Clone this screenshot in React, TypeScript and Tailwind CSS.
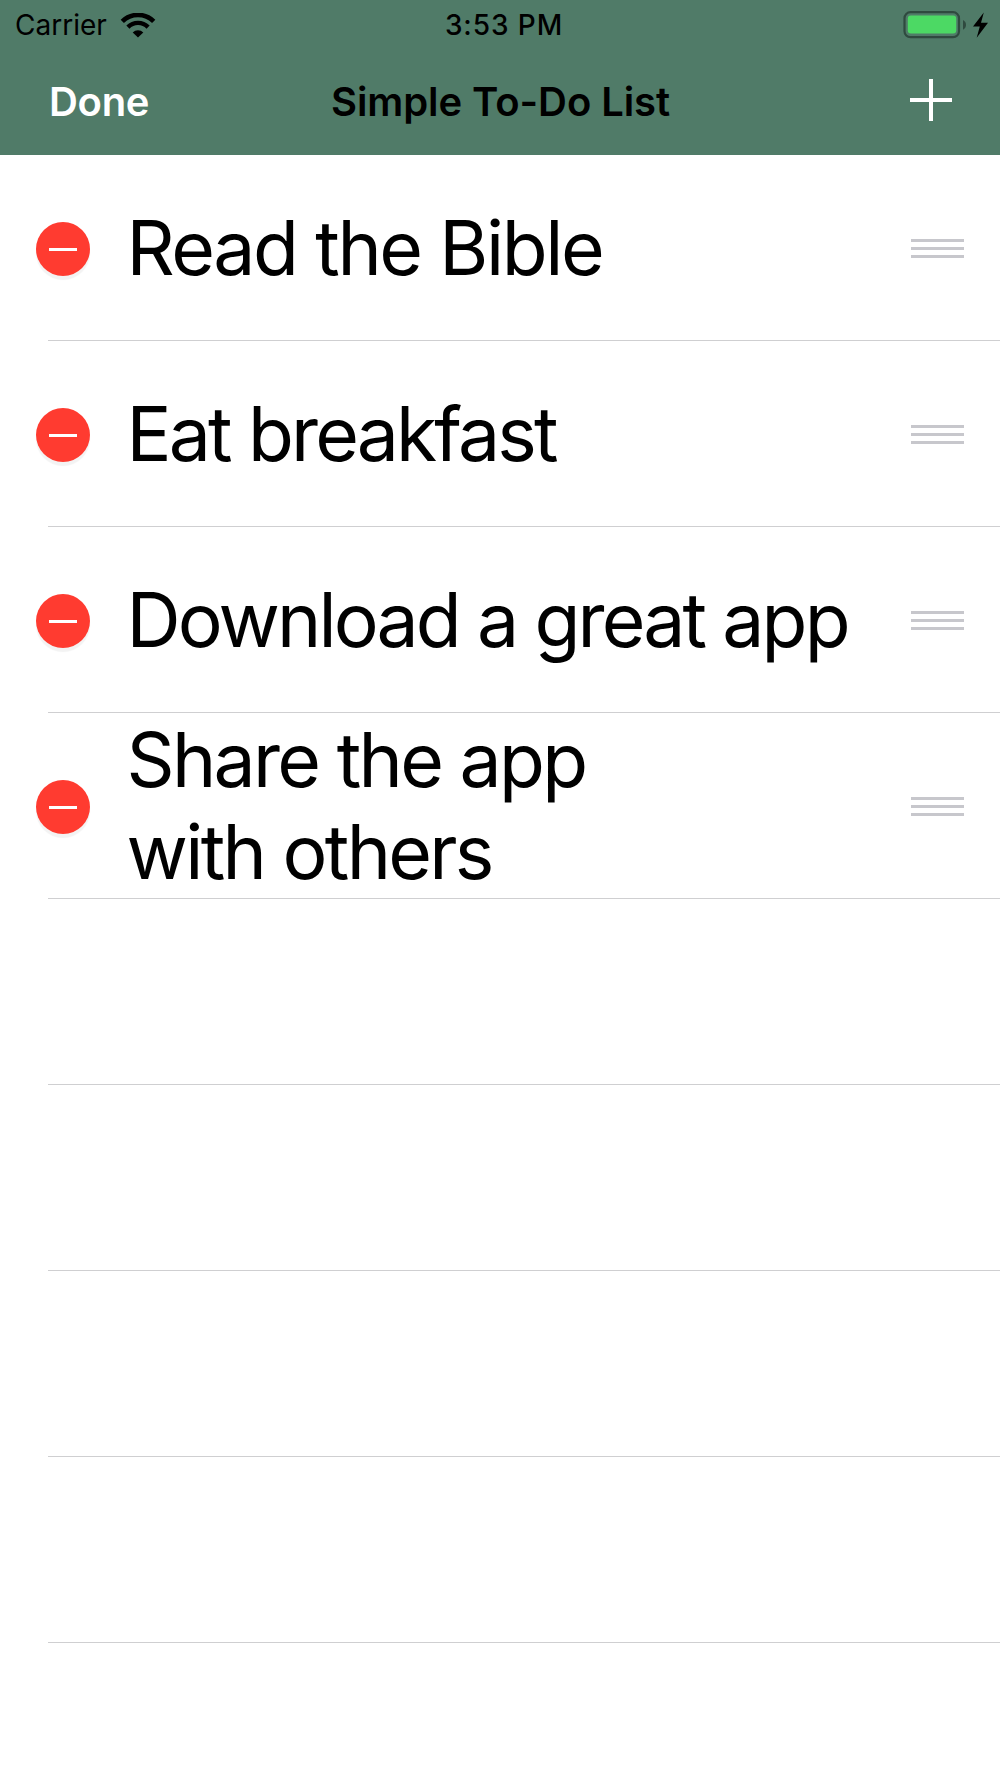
const tasks = [
  { title: "Read the Bible", tracking: "tracking-[-2.4px]" },
  { title: "Eat breakfast", tracking: "tracking-[-2.85px]" },
  { title: "Download a great app", tracking: "tracking-[-2.88px]" },
  { title: "Share the app\nwith others", tracking: "tracking-[-2.7px]" },
];

const emptyRows = 4;

function WifiIcon() {
  return (
    <svg width="36" height="26" viewBox="0 0 36 26" fill="none" stroke="#000">
      <path d="M2.3 8.4a22.2 22.2 0 0 1 31.4 0" strokeWidth="4.6" />
      <path d="M7.9 14.1a14.3 14.3 0 0 1 20.2 0" strokeWidth="4.4" />
      <path d="M18 24.6l-5.3-5.2a7.5 7.5 0 0 1 10.6 0z" fill="#000" stroke="none" />
    </svg>
  );
}

function BatteryIcon() {
  return (
    <svg width="89" height="30" viewBox="0 0 89 30">
      <rect x="1.5" y="1.2" width="54.5" height="25" rx="6" fill="none" stroke="#2f4a3f" strokeWidth="2.2" />
      <rect x="4.8" y="4.6" width="48.4" height="18" rx="3" fill="#4cd964" />
      <path d="M60 8.9q3 1.6 3 4.9t-3 4.9z" fill="#2f4a3f" />
      <path d="M80.8 1.5L70 15.5h6.8l-3.1 11.3L85 11.7h-7z" fill="#000" />
    </svg>
  );
}

function StatusBar() {
  return (
    <div className="grid h-[50px] grid-cols-3 items-center text-[28px] leading-[51px]">
      <div className="flex items-center gap-[13px] pl-[15px]">
        <span>Carrier</span>
        <WifiIcon />
      </div>
      <div className="pl-2 text-center font-medium tracking-[0.9px]">3:53 PM</div>
      <div className="flex justify-end pr-2">
        <BatteryIcon />
      </div>
    </div>
  );
}

function NavBar() {
  return (
    <div className="grid h-[104px] grid-cols-[1fr_auto_1fr] items-center text-[40px] font-semibold leading-[104px]">
      <button className="pl-[49px] text-left tracking-[-0.3px] text-white">Done</button>
      <h1 className="pl-px tracking-[-0.08px]">Simple To-Do List</h1>
      <button aria-label="Add" className="flex justify-end pb-1 pr-12">
        <svg width="42" height="42" viewBox="0 0 42 42" stroke="#fff" strokeWidth="4">
          <path d="M0 21h42M21 0v42" />
        </svg>
      </button>
    </div>
  );
}

function DeleteIcon() {
  return (
    <span className="mt-[3px] flex size-[54px] shrink-0 items-center justify-center rounded-full bg-[#ff3b30] shadow-[0_4px_1px_#f3f3f3]">
      <span className="h-[3px] w-7 bg-white" />
    </span>
  );
}

function ReorderHandle() {
  return (
    <span className="mt-[2px] flex w-[53px] shrink-0 flex-col gap-[5px]">
      <span className="h-[3px] bg-[#c7c7cc]" />
      <span className="h-[3px] bg-[#c7c7cc]" />
      <span className="h-[3px] bg-[#c7c7cc]" />
    </span>
  );
}

function TaskRow({ title, tracking }: { title: string; tracking: string }) {
  return (
    <li>
      <div className="flex h-[185px] items-center pl-9 pr-9">
        <DeleteIcon />
        <span className={`ml-[36.5px] flex-1 whitespace-pre pt-px text-[75px] leading-[92px] ${tracking}`}>
          {title}
        </span>
        <ReorderHandle />
      </div>
      <div className="ml-12 h-px bg-[#cfcfd1]" />
    </li>
  );
}

export default function App() {
  return (
    <div className="h-[1778px] w-[1000px] overflow-hidden bg-white font-[Inter,sans-serif] text-black">
      <header className="h-[155px] bg-[#507b68]">
        <StatusBar />
        <NavBar />
      </header>
      <ul>
        {tasks.map((task) => (
          <TaskRow key={task.title} {...task} />
        ))}
        {Array.from({ length: emptyRows }, (_, i) => (
          <li key={i}>
            <div className="h-[185px]" />
            <div className="ml-12 h-px bg-[#cfcfd1]" />
          </li>
        ))}
      </ul>
    </div>
  );
}
